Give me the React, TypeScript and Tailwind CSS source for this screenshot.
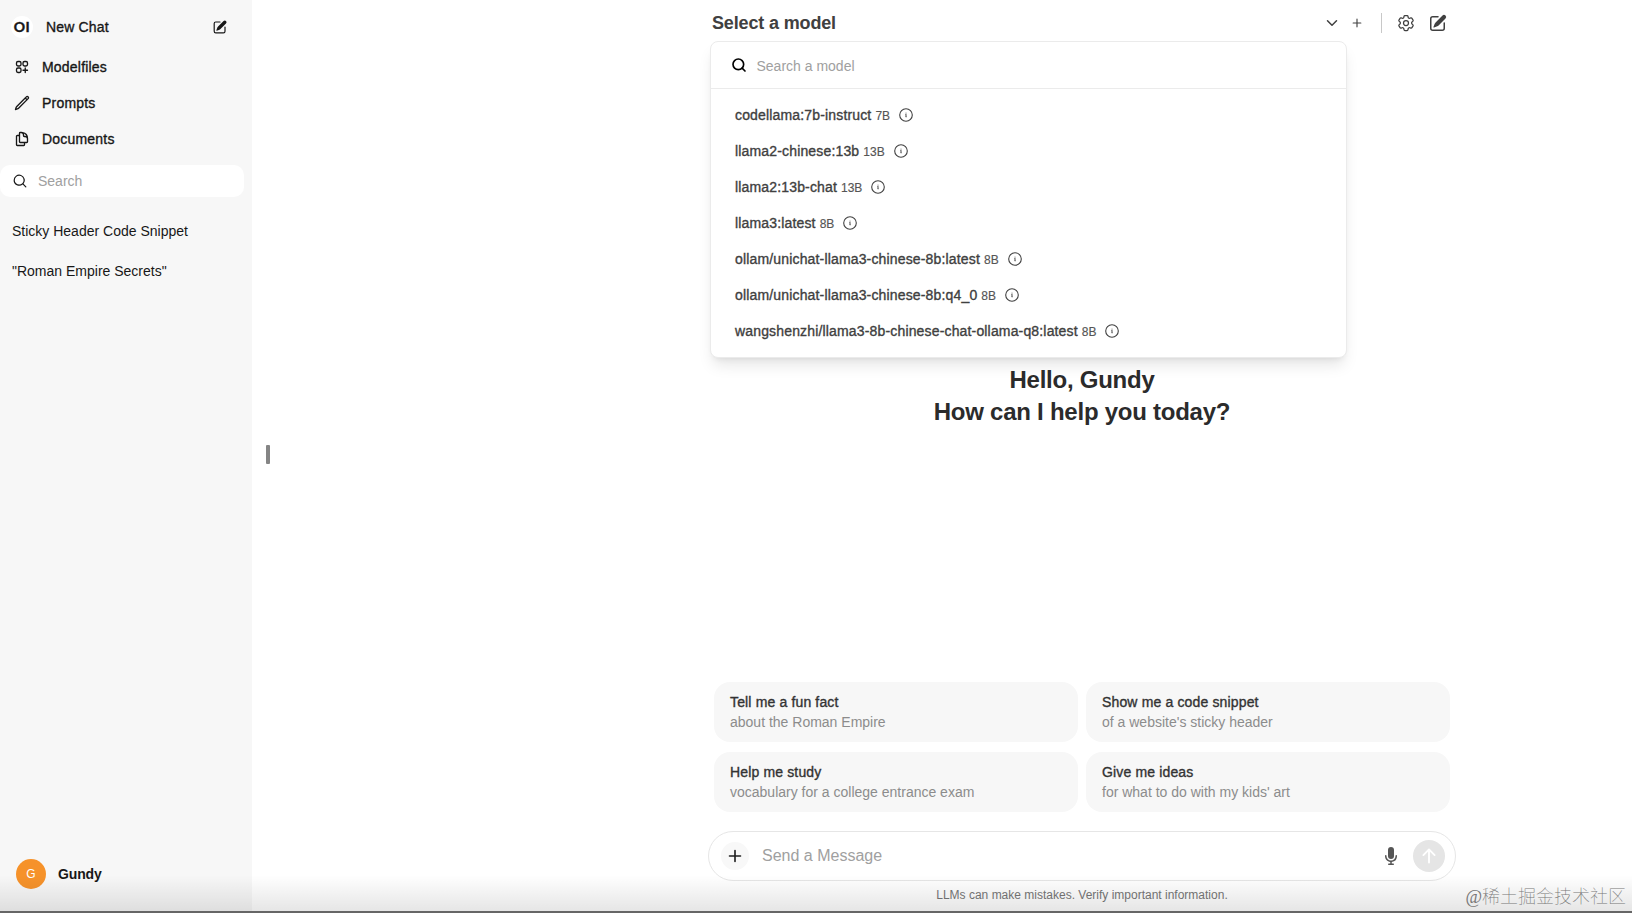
import React from 'react';
import { ChevronDown, Search } from 'lucide-react';
import {
  HiMiniMagnifyingGlass,
  HiMiniMicrophone,
  HiMiniPencilSquare,
  HiOutlineCog6Tooth,
  HiOutlineDocumentDuplicate,
  HiOutlinePencil,
  HiOutlineSquaresPlus
} from 'react-icons/hi2';

const navItems = [
  { label: 'Modelfiles', icon: HiOutlineSquaresPlus },
  { label: 'Prompts', icon: HiOutlinePencil },
  { label: 'Documents', icon: HiOutlineDocumentDuplicate }
];

const chats = ['Sticky Header Code Snippet', '"Roman Empire Secrets"'];

const models = [
  { name: 'codellama:7b-instruct', size: '7B' },
  { name: 'llama2-chinese:13b', size: '13B' },
  { name: 'llama2:13b-chat', size: '13B' },
  { name: 'llama3:latest', size: '8B' },
  { name: 'ollam/unichat-llama3-chinese-8b:latest', size: '8B' },
  { name: 'ollam/unichat-llama3-chinese-8b:q4_0', size: '8B' },
  { name: 'wangshenzhi/llama3-8b-chinese-chat-ollama-q8:latest', size: '8B' }
];

const suggestions = [
  { title: 'Tell me a fun fact', subtitle: 'about the Roman Empire' },
  { title: 'Show me a code snippet', subtitle: "of a website's sticky header" },
  { title: 'Help me study', subtitle: 'vocabulary for a college entrance exam' },
  { title: 'Give me ideas', subtitle: "for what to do with my kids' art" }
];

const PlusIcon = ({ className }: { className: string }) => (
  <svg viewBox="0 0 16 16" fill="none" stroke="currentColor" strokeWidth="1.3" strokeLinecap="round" className={className}>
    <path d="M8 3.6v8.8M3.6 8h8.8" />
  </svg>
);

const InfoIcon = ({ className }: { className: string }) => (
  <svg viewBox="0 0 16 16" fill="none" stroke="currentColor" strokeLinecap="round" className={className}>
    <circle cx="8" cy="8" r="6.3" strokeWidth="1.1" />
    <path d="M7.7 7.6l.5-.1-.4 2.4.5-.1M8 6.1v.01" strokeWidth="0.9" />
  </svg>
);

const ArrowUpIcon = ({ className }: { className: string }) => (
  <svg viewBox="0 0 16 16" fill="currentColor" className={className}>
    <path
      fillRule="evenodd"
      clipRule="evenodd"
      d="M8 14a.75.75 0 0 1-.75-.75V4.56L4.03 7.78a.75.75 0 0 1-1.06-1.06l4.5-4.5a.75.75 0 0 1 1.06 0l4.5 4.5a.75.75 0 0 1-1.06 1.06L8.75 4.56v8.69A.75.75 0 0 1 8 14Z"
    />
  </svg>
);

const Sidebar: React.FC = () => (
  <aside className="flex w-[252px] shrink-0 flex-col bg-[#f7f7f7] text-[#171717]">
    <div className="mt-[11px] flex h-8 items-center pl-[11px] pr-6">
      <div className="flex size-[22px] items-center justify-center rounded-full bg-white font-['Lato',sans-serif] text-[14px] font-bold leading-none tracking-[0.4px] [-webkit-text-stroke:0.4px]">
        OI
      </div>
      <span className="ml-[13px] text-[14px] tracking-[0.15px] [-webkit-text-stroke:0.35px]">New Chat</span>
      <HiMiniPencilSquare className="ml-auto size-4" />
    </div>

    <nav className="mt-[6px] flex flex-col">
      {navItems.map(({ label, icon: Icon }) => (
        <a key={label} className="flex h-9 items-center pl-[14px]">
          <Icon className="size-4" strokeWidth={2} />
          <span className="ml-3 text-[14px] tracking-[0.2px] [-webkit-text-stroke:0.35px]">{label}</span>
        </a>
      ))}
    </nav>

    <div className="mt-2 flex h-8 w-[244px] items-center rounded-[10px] bg-white pl-3">
      <HiMiniMagnifyingGlass className="size-4" />
      <span className="ml-[10px] text-[14px] text-[#a0a0a0]">Search</span>
    </div>

    <div className="mt-[14px] flex flex-col">
      {chats.map((chat) => (
        <div key={chat} className="flex h-10 items-center pl-3 text-[14px]">
          {chat}
        </div>
      ))}
    </div>

    <div className="mb-[24px] mt-auto flex items-center pl-4">
      <div className="flex size-[30px] items-center justify-center rounded-full bg-[#f6922a] text-[12px] text-white">
        G
      </div>
      <span className="ml-3 text-[14px] font-bold tracking-[-0.15px]">Gundy</span>
    </div>
  </aside>
);

const ModelMenu: React.FC = () => (
  <div className="absolute left-[-2px] top-[41px] z-10 h-[317px] w-[637px] rounded-lg border border-[#ebebeb] bg-white shadow-lg">
    <div className="flex h-[47px] items-center border-b border-[#ebebeb] pl-[20px]">
      <Search className="size-4 text-black" strokeWidth={2.5} />
      <span className="ml-[9.5px] pt-[2px] text-[14px] text-[#a0a0a0]">Search a model</span>
    </div>
    <div className="flex flex-col pt-[8px] text-[#404040]">
      {models.map((model) => (
        <div key={model.name} className="flex h-9 items-center pl-6">
          <span className="text-[14px] tracking-[0.16px] [-webkit-text-stroke:0.35px]">{model.name}</span>
          <span className="ml-1 pt-px text-[12px] text-[#555] [-webkit-text-stroke:0.15px]">{model.size}</span>
          <InfoIcon className="ml-2 size-4" />
        </div>
      ))}
    </div>
  </div>
);

export default function App() {
  return (
    <div className="relative flex h-[913px] w-[1632px] overflow-hidden bg-white font-['Liberation_Sans',Arial,sans-serif]">
      <Sidebar />

      <div className="flex w-8 shrink-0 items-center justify-center">
        <div className="mb-[5px] h-[19px] w-1 rounded-[1px] bg-[#858585]" />
      </div>

      <main className="ml-[424px] flex w-[748px] flex-col">
        <header className="relative ml-1 flex h-[46px] items-center text-[#404040]">
          <h1 className="text-[18px] font-bold tracking-[-0.15px]">Select a model</h1>
          <ChevronDown className="ml-auto size-[18px]" strokeWidth={2} />
          <PlusIcon className="ml-[9px] size-[14px]" />
          <div className="ml-[17px] h-5 w-px bg-[#c8c8c8]" />
          <HiOutlineCog6Tooth className="ml-[14px] size-5" />
          <HiMiniPencilSquare className="ml-3 mr-2 size-5" />
          <ModelMenu />
        </header>

        <div className="mt-[318px] text-center text-[24px] font-bold leading-8 tracking-[-0.25px] text-[#2b2b2b]">
          <div>Hello, Gundy</div>
          <div>How can I help you today?</div>
        </div>

        <div className="mx-[6px] mt-[254px] grid grid-cols-2 gap-x-[8px] gap-y-[10px]">
          {suggestions.map((item) => (
            <div key={item.title} className="h-[60px] rounded-2xl bg-[#f7f7f7] px-4 pt-[10px]">
              <div className="text-[14px] leading-5 tracking-[0.15px] text-[#333] [-webkit-text-stroke:0.35px]">
                {item.title}
              </div>
              <div className="text-[14px] leading-5 text-[#8c8c8c]">{item.subtitle}</div>
            </div>
          ))}
        </div>

        <div className="mt-[19px] flex h-[50px] items-center rounded-full border border-[#e6e6e6] pl-[12px] pr-[10px]">
          <div className="flex size-7 items-center justify-center rounded-full bg-[#f8f8f8]">
            <PlusIcon className="size-5 text-[#1f1f1f]" />
          </div>
          <span className="ml-[13px] text-[16px] text-[#a0a0a0]">Send a Message</span>
          <HiMiniMicrophone className="ml-auto size-5 text-[#555]" />
          <div className="ml-[12px] flex size-8 items-center justify-center rounded-full bg-[#e5e5e5]">
            <ArrowUpIcon className="size-5 text-white" />
          </div>
        </div>

        <p className="mt-[6px] text-center text-[12px] leading-4 text-[#777]">
          LLMs can make mistakes. Verify important information.
        </p>
      </main>

      {/* shade along the window's lower edge */}
      <div className="pointer-events-none absolute inset-x-0 bottom-[2px] h-9 bg-gradient-to-b from-transparent to-black/10" />
      <div className="absolute inset-x-0 bottom-0 h-[2px] bg-[#666]" />

      <div className="absolute bottom-[4px] right-[6px] whitespace-nowrap font-['Liberation_Serif','Noto_Sans_CJK_SC',serif] text-[18px] font-thin leading-[24px] text-[#777]">
        @稀土掘金技术社区
      </div>
    </div>
  );
}
